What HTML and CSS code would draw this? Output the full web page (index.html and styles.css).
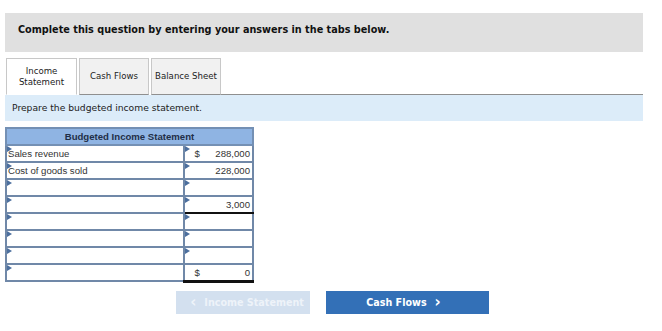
FILE: index.html
```html
<!DOCTYPE html>
<html lang="en">
<head>
    <meta charset="UTF-8">
    <title>Budgeted Income Statement</title>
    <link rel="stylesheet" href="styles.css">
</head>
<body>
    <div class="page">
        <div class="instr">Complete this question by entering your answers in the tabs below.</div>

        <div class="tabs">
            <div class="tab active">Income<br>Statement</div>
            <div class="tab">Cash Flows</div>
            <div class="tab">Balance Sheet</div>
            <div class="tab-rest"></div>
        </div>

        <div class="prompt">Prepare the budgeted income statement.</div>

        <table class="sheet">
            <tr>
                <th colspan="2">Budgeted Income Statement</th>
            </tr>
            <tr>
                <td class="label mark">Sales revenue</td>
                <td class="val mark"><span>$</span><span>288,000</span></td>
            </tr>
            <tr>
                <td class="label mark">Cost of goods sold</td>
                <td class="val mark"><span></span><span>228,000</span></td>
            </tr>
            <tr>
                <td class="label mark"></td>
                <td class="val mark"><span></span><span></span></td>
            </tr>
            <tr>
                <td class="label mark"></td>
                <td class="val mark under"><span></span><span>3,000</span></td>
            </tr>
            <tr>
                <td class="label mark"></td>
                <td class="val mark"><span></span><span></span></td>
            </tr>
            <tr>
                <td class="label mark"></td>
                <td class="val mark"><span></span><span></span></td>
            </tr>
            <tr>
                <td class="label mark"></td>
                <td class="val mark"><span></span><span></span></td>
            </tr>
            <tr>
                <td class="label mark"></td>
                <td class="val total"><span>$</span><span>0</span></td>
            </tr>
        </table>

        <div class="nav">
            <div class="btn prev"><span class="chev">&lsaquo;</span> Income Statement</div>
            <div class="btn next">Cash Flows <span class="chev">&rsaquo;</span></div>
        </div>
    </div>
</body>
</html>
```

FILE: styles.css
```css
*{
    padding: 0;
    margin: 0;
    box-sizing: border-box;
}
body{
    background: #fff;
    font-family: "DejaVu Sans", Verdana, sans-serif;
    color: #222;
}
.page{
    width: 638px;
    margin-left: 5px;
    padding-top: 13px;
}

.instr{
    height: 39px;
    background-color: #e0e0e0;
    padding: 11px 0 0 13px;
    font-size: 9.7px;
    font-weight: bold;
    color: #111;
}

.tabs{
    display: flex;
    align-items: flex-end;
    margin-top: 6px;
    height: 37px;
}
.tab{
    height: 37px;
    display: flex;
    align-items: center;
    justify-content: center;
    text-align: center;
    font-size: 8.6px;
    line-height: 11px;
    color: #222;
    background-color: #f1f1f1;
    border: 1px solid #c8c8c8;
    border-bottom: 1px solid #8f8f8f;
    margin-right: 2px;
}
.tab:nth-child(1){ width: 71px; margin-left: 1px; }
.tab:nth-child(2){ width: 70px; }
.tab:nth-child(3){ width: 70px; }
.tab.active{
    background-color: #fff;
    border-bottom: 1px solid #fff;
}
.tab-rest{
    flex: 1;
    height: 1px;
    background-color: #8f8f8f;
    margin-left: -2px;
}

.prompt{
    height: 26px;
    background-color: #dcecf9;
    padding: 7px 0 0 7px;
    font-size: 9.2px;
    color: #222;
}

.sheet{
    margin-top: 6px;
    border-collapse: collapse;
    width: 249px;
    font-family: "Liberation Sans", Arial, sans-serif;
    font-size: 9.6px;
    color: #333;
}
.sheet th{
    height: 17px;
    background-color: #8fb4e3;
    border: 2px solid #7490b4;
    font-size: 9.6px;
    font-weight: bold;
    color: #1f2f48;
    text-align: center;
}
.sheet td{
    height: 17px;
    border: 2px solid #7088a8;
    background-color: #fff;
    position: relative;
    padding: 0 2px 0 1px;
    white-space: nowrap;
}
.sheet .label{
    width: 180px;
}
.sheet .val{
    width: 69px;
}
.sheet .val span:first-child{
    float: left;
    padding-left: 8px;
}
.sheet .val span:last-child{
    float: right;
}
.sheet .mark::before{
    content: "";
    position: absolute;
    left: 0;
    top: 0;
    border-top: 3px solid transparent;
    border-bottom: 3px solid transparent;
    border-left: 5px solid #4c6f9e;
}
.sheet .under{
    border-bottom: 2px solid #111;
}
.sheet .total{
    border-top: 2px solid #111;
    border-bottom: 3px solid #111;
}

.nav{
    display: flex;
    gap: 16px;
    margin-top: 8px;
    margin-left: 171px;
}
.btn{
    height: 23px;
    display: flex;
    align-items: center;
    justify-content: center;
    font-size: 9.6px;
    font-weight: bold;
    color: #fff;
}
.btn .chev{
    font-size: 15px;
    line-height: 10px;
    margin: 0 8px;
}
.prev{
    width: 134px;
    background-color: #d3e0ef;
    color: #eef3f9;
}
.next{
    width: 163px;
    background-color: #3370b7;
}
```
